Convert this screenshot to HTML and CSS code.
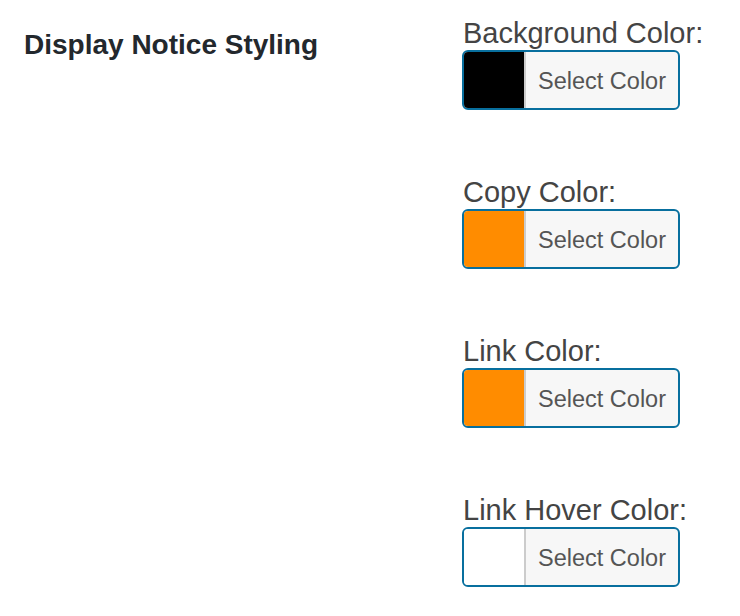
FILE: index.html
```html
<!DOCTYPE html>
<html>
<head>
<meta charset="utf-8">
<link rel="stylesheet" href="styles.css">
</head>
<body>
<div class="row">
  <div class="row-title">Display Notice Styling</div>
  <div class="row-fields">
    <div class="field">
      <div class="field-label">Background Color:</div>
      <button class="color-result"><span class="swatch" style="background:#000000"></span><span class="result-text">Select Color</span></button>
    </div>
    <div class="field">
      <div class="field-label">Copy Color:</div>
      <button class="color-result"><span class="swatch" style="background:#ff8c00"></span><span class="result-text">Select Color</span></button>
    </div>
    <div class="field">
      <div class="field-label">Link Color:</div>
      <button class="color-result"><span class="swatch" style="background:#ff8c00"></span><span class="result-text">Select Color</span></button>
    </div>
    <div class="field">
      <div class="field-label">Link Hover Color:</div>
      <button class="color-result"><span class="swatch" style="background:#ffffff"></span><span class="result-text">Select Color</span></button>
    </div>
  </div>
</div>
</body>
</html>
```
FILE: styles.css
```css
html, body {
  margin: 0;
  padding: 0;
  background: #ffffff;
  font-family: "Liberation Sans", Arial, sans-serif;
}

.row {
  display: flex;
  padding-top: 16px;
}

.row-title {
  box-sizing: border-box;
  width: 462px;
  padding: 13px 0 0 24px;
  font-size: 28px;
  line-height: 32px;
  font-weight: bold;
  color: #23282d;
}

.row-fields {
  display: flex;
  flex-direction: column;
  gap: 65px;
}

.field {
  display: flex;
  flex-direction: column;
  align-items: flex-start;
}

.field-label {
  font-size: 29px;
  line-height: 34px;
  color: #444444;
  padding-left: 1px;
}

.color-result {
  display: flex;
  box-sizing: border-box;
  width: 218px;
  height: 60px;
  padding: 0;
  margin: 0;
  border: 2px solid #086f9e;
  border-radius: 6px;
  background: #f7f7f7;
  overflow: hidden;
  font-family: inherit;
  cursor: pointer;
}

.swatch {
  flex: 0 0 60px;
  height: 100%;
  border-right: 2px solid #cccccc;
}

.result-text {
  flex: 1;
  padding: 1px 0 0 12px;
  text-align: left;
  font-size: 23.5px;
  line-height: 56px;
  color: #555555;
}
```
